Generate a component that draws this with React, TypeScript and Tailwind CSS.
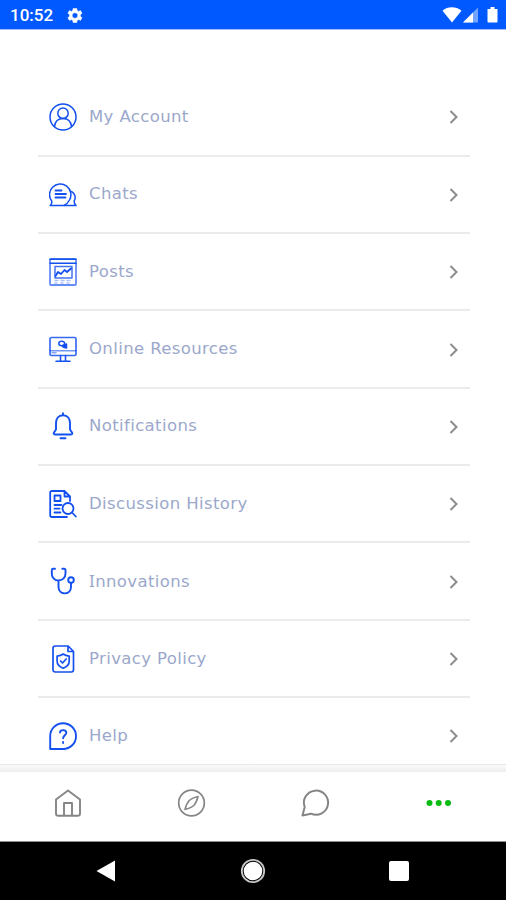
import React from "react";

const icons: Record<string, React.ReactNode> = {
  account: (
    <>
      <circle cx="14" cy="14" r="13" />
      <circle cx="14" cy="10.2" r="5.2" />
      <path d="M5.500 23.500c.6-5 3.800-8 8.500-8s7.900 3 8.500 8" />
    </>
  ),
  chats: (
    <>
      <path d="M1.200 25.500c1.300-.8 1.800-2 1.600-4.200A10.700 10.700 0 1 1 20.500 20c-1.300 2.500-3 4.500-5.500 5.500Z" />
      <path d="M6.500 10.500h6M6.500 14h10.500M6.500 17.500h10" strokeWidth="1.800" />
      <path d="M22.500 11.500c3.500 1.700 4.700 6.500 2.600 9.600 0 2 .6 3.300 1.900 4.400H15" />
    </>
  ),
  posts: (
    <>
      <rect x="1" y="1" width="26" height="26" rx="1" strokeWidth="1.800" strokeOpacity=".65" />
      <path d="M1 1.300h26M1 5.200h26" />
      <rect x="6" y="8.500" width="17" height="11.500" strokeOpacity=".8" />
      <path d="m6.500 18 2.500-4 3 2 3.500-4 2.500 2 4-3.500" strokeWidth="1.800" />
      <path d="M6 22.500h3m3 0h3m3 0h3M6 25h2m4 0h2m4 0h2" strokeOpacity=".35" />
    </>
  ),
  resources: (
    <>
      <rect x="1" y="2.500" width="26" height="18" rx="1.500" strokeWidth="1.700" strokeOpacity=".85" />
      <path d="M1 15.800h26" strokeOpacity=".6" />
      <path d="M3 17.800h4" strokeOpacity=".5" />
      <path d="M11.500 20.500v5M16.500 20.500v5M7 26.300h14" />
      <ellipse cx="12.700" cy="8.500" rx="2.900" ry="2.200" />
      <path d="m13.500 10.800 4-1.800v4l-3-.8z" fill="#1450f0" />
    </>
  ),
  notifications: (
    <g strokeWidth="1.900">
      <path d="M14 1.300v2M14 3.300c-4.700 0-7 3.500-7 8v6.200L5 20.500c-.7 1.200-.3 2 1 2h16c1.300 0 1.700-.8 1-2l-2-3v-6.200c0-4.500-2.300-8-7-8ZM11.500 26.300h5" />
    </g>
  ),
  history: (
    <g strokeWidth="1.800">
      <path d="M18 27H3c-1.200 0-1.800-.6-1.800-1.800V2.800C1.200 1.600 1.800 1 3 1h12.500l5.500 5.500V11M15.500 1v5.500H21" />
      <rect x="5.500" y="5.500" width="6" height="5.500" />
      <path d="M5.500 15h7M5.500 18.700h5M5.500 22.500h6" />
      <circle cx="19" cy="18.500" r="5.500" />
      <path d="m23 22.500 3.800 4" />
    </g>
  ),
  innovations: (
    <g strokeWidth="1.900">
      <path d="M6 1.700H4.300c-1 0-1.500.5-1.500 1.500v3.300c0 4.300 3 7 6.700 7s7-2.700 7-7V3.200c0-1-.5-1.500-1.500-1.500h-1.700M9.500 13.500v6.500c0 8.500 12.500 8.500 12.500 0v-4" />
      <circle cx="22" cy="13" r="2.800" />
    </g>
  ),
  privacy: (
    <g strokeWidth="1.700">
      <path d="M6.200 1h13l5.300 5.500v18.300c0 1.400-.7 2.200-2.200 2.200H6.200c-1.400 0-2.200-.8-2.200-2.200V3.200C4 1.800 4.800 1 6.200 1ZM19 1v5.500h5.500" />
      <path d="M14.200 9c1.800 1.400 3.700 1.900 6 2.100v4.900c0 3.600-2.400 5.900-6 7.200-3.600-1.300-6.100-3.600-6.100-7.200v-4.900c2.300-.2 4.300-.7 6.100-2.100Z" />
      <path d="m11.500 16 2 2 3.700-4" />
    </g>
  ),
  help: (
    <g strokeWidth="1.900">
      <path d="M1.200 27V14A12.900 12.900 0 1 1 14.100 27Z" />
      <path d="M11 10.500c.3-3.200 6.300-3.200 6.300.3 0 2.400-3.200 2.500-3.200 5.500M14.100 20v1" />
    </g>
  ),
};

const items = [
  { icon: "account", label: "My Account" },
  { icon: "chats", label: "Chats" },
  { icon: "posts", label: "Posts" },
  { icon: "resources", label: "Online Resources" },
  { icon: "notifications", label: "Notifications" },
  { icon: "history", label: "Discussion History" },
  { icon: "innovations", label: "Innovations" },
  { icon: "privacy", label: "Privacy Policy" },
  { icon: "help", label: "Help" },
];

function StatusBar() {
  return (
    <header className="flex h-[30px] shrink-0 items-center border-b border-[#a9b8fb] bg-[#0059ff] pr-[7px] pl-[10px] text-white">
      <span className="w-[56px] pt-[2px] font-[Roboto,sans-serif] text-[17px] leading-none font-medium">10:52</span>
      <svg className="mt-[2px] -ml-[1px] h-[19px] w-[19px]" viewBox="0 0 24 24" fill="currentColor" stroke="currentColor" strokeWidth=".6">
        <path d="M19.400 13a7.500 7.500 0 0 0 0-2l2.100-1.700-2-3.500-2.500 1a8 8 0 0 0-1.700-1L15 3.200h-4.800l-.4 2.600a8 8 0 0 0-1.700 1l-2.500-1-2 3.500L5.800 11a8 8 0 0 0 0 2l-2.200 1.700 2 3.500 2.500-1a8 8 0 0 0 1.700 1l.4 2.600H15l.3-2.600a8 8 0 0 0 1.700-1l2.500 1 2-3.500ZM12.600 15.500a3.500 3.500 0 1 1 0-7 3.500 3.500 0 0 1 0 7Z" />
      </svg>
      <svg className="ml-auto h-[18px] w-[57px]" viewBox="0 0 57 18" fill="currentColor">
        <path d="M.5 4.800C5.500.2 14 .2 19.500 4.800L10 16.500Z" />
        <path d="M36 1.500v15H21Z" fillOpacity=".45" />
        <path d="M31 6.500v10H21Z" />
        <path d="M45.500 3h3V1h4v2h3v12.500c0 .7-.3 1-1 1h-8c-.7 0-1-.3-1-1Z" />
      </svg>
    </header>
  );
}

export default function App() {
  return (
    <div className="flex h-[900px] w-[506px] flex-col overflow-hidden bg-white">
      <StatusBar />
      <main className="min-h-0 flex-1 overflow-hidden pr-[36px] pl-[37.500px] pt-[49.200px]">
        {items.map(({ icon, label }) => (
          <div key={label} className="flex h-[77.375px] items-center border-b-2 border-[#ebebeb] pr-[11px] pl-[11.500px]">
            <svg className="h-7 w-7 shrink-0" viewBox="0 0 28 28" fill="none" stroke="#1450f0" strokeWidth="1.500" strokeLinecap="round" strokeLinejoin="round">
              {icons[icon]}
            </svg>
            <span className="ml-[12px] font-['DejaVu_Sans',sans-serif] text-[16.500px] leading-6 tracking-[0.380px] text-[#9ba8cb]">
              {label.startsWith("I") ? (
                <>
                  <span className="font-['Noto_Sans',sans-serif] text-[17px]">I</span>
                  {label.slice(1)}
                </>
              ) : (
                label
              )}
            </span>
            <svg className="mt-[1px] ml-auto h-[14px] w-[10px]" viewBox="0 0 10 14" fill="none" stroke="#8c8c8c" strokeWidth="2">
              <path d="m1.500 1 6 6-6 6" />
            </svg>
          </div>
        ))}
      </main>
      <div className="h-[8px] shrink-0 border-t border-[#e8e8e8] bg-linear-to-b from-[#fafafa] to-[#eeeeee]" />
      <nav className="flex h-[70px] shrink-0 items-center justify-around border-b border-[#8e8e8e] pr-[5px] pl-[6px] pb-[7px]">
        <svg className="h-[30px] w-[30px]" viewBox="0 0 30 30" fill="none" stroke="#858585" strokeWidth="1.900" strokeLinejoin="round">
          <path d="M3 11.500 15 2.500l12 9V25.500c0 1.500-.8 2.300-2.300 2.300H5.300C3.800 27.800 3 27 3 25.500ZM11 27.500V15h8v12.500" />
        </svg>
        <svg className="h-[30px] w-[30px]" viewBox="0 0 30 30" fill="none" stroke="#858585" strokeWidth="1.700" strokeLinejoin="round">
          <circle cx="14.500" cy="15" r="12.800" />
          <path d="M21 8.500c-1 4-2 6.500-4 8.700-2.500 2.500-5 3.300-9 4.300 1-4 2-6.500 4-8.700 2.500-2.500 5-3.300 9-4.300Z" strokeWidth="1.600" />
        </svg>
        <svg className="h-[30px] w-[30px]" viewBox="0 0 30 30" fill="none" stroke="#858585" strokeWidth="2" strokeLinejoin="round">
          <path d="M4.700 19A12.100 12.100 0 1 1 11 25.700L2.500 27.500Z" />
        </svg>
        <svg className="h-[30px] w-[30px]" viewBox="0 0 30 30" fill="#08ba12">
          <circle cx="5.500" cy="15" r="3" />
          <circle cx="14.700" cy="15" r="3" />
          <circle cx="24" cy="15" r="3" />
        </svg>
      </nav>
      <footer className="flex h-[58px] shrink-0 items-center justify-between bg-black px-[96px]">
        <svg className="h-[22px] w-[19px]" viewBox="0 0 19 22" fill="white">
          <path d="M.5 11 19 .5v21Z" />
        </svg>
        <svg className="ml-[2px] h-[26px] w-[26px]" viewBox="0 0 26 26">
          <circle cx="13" cy="13" r="11.200" fill="none" stroke="#c8c8c8" strokeWidth="1.800" />
          <circle cx="13" cy="13" r="9.300" fill="white" />
        </svg>
        <div className="mr-[1px] h-5 w-5 rounded-[2px] bg-white" />
      </footer>
    </div>
  );
}
